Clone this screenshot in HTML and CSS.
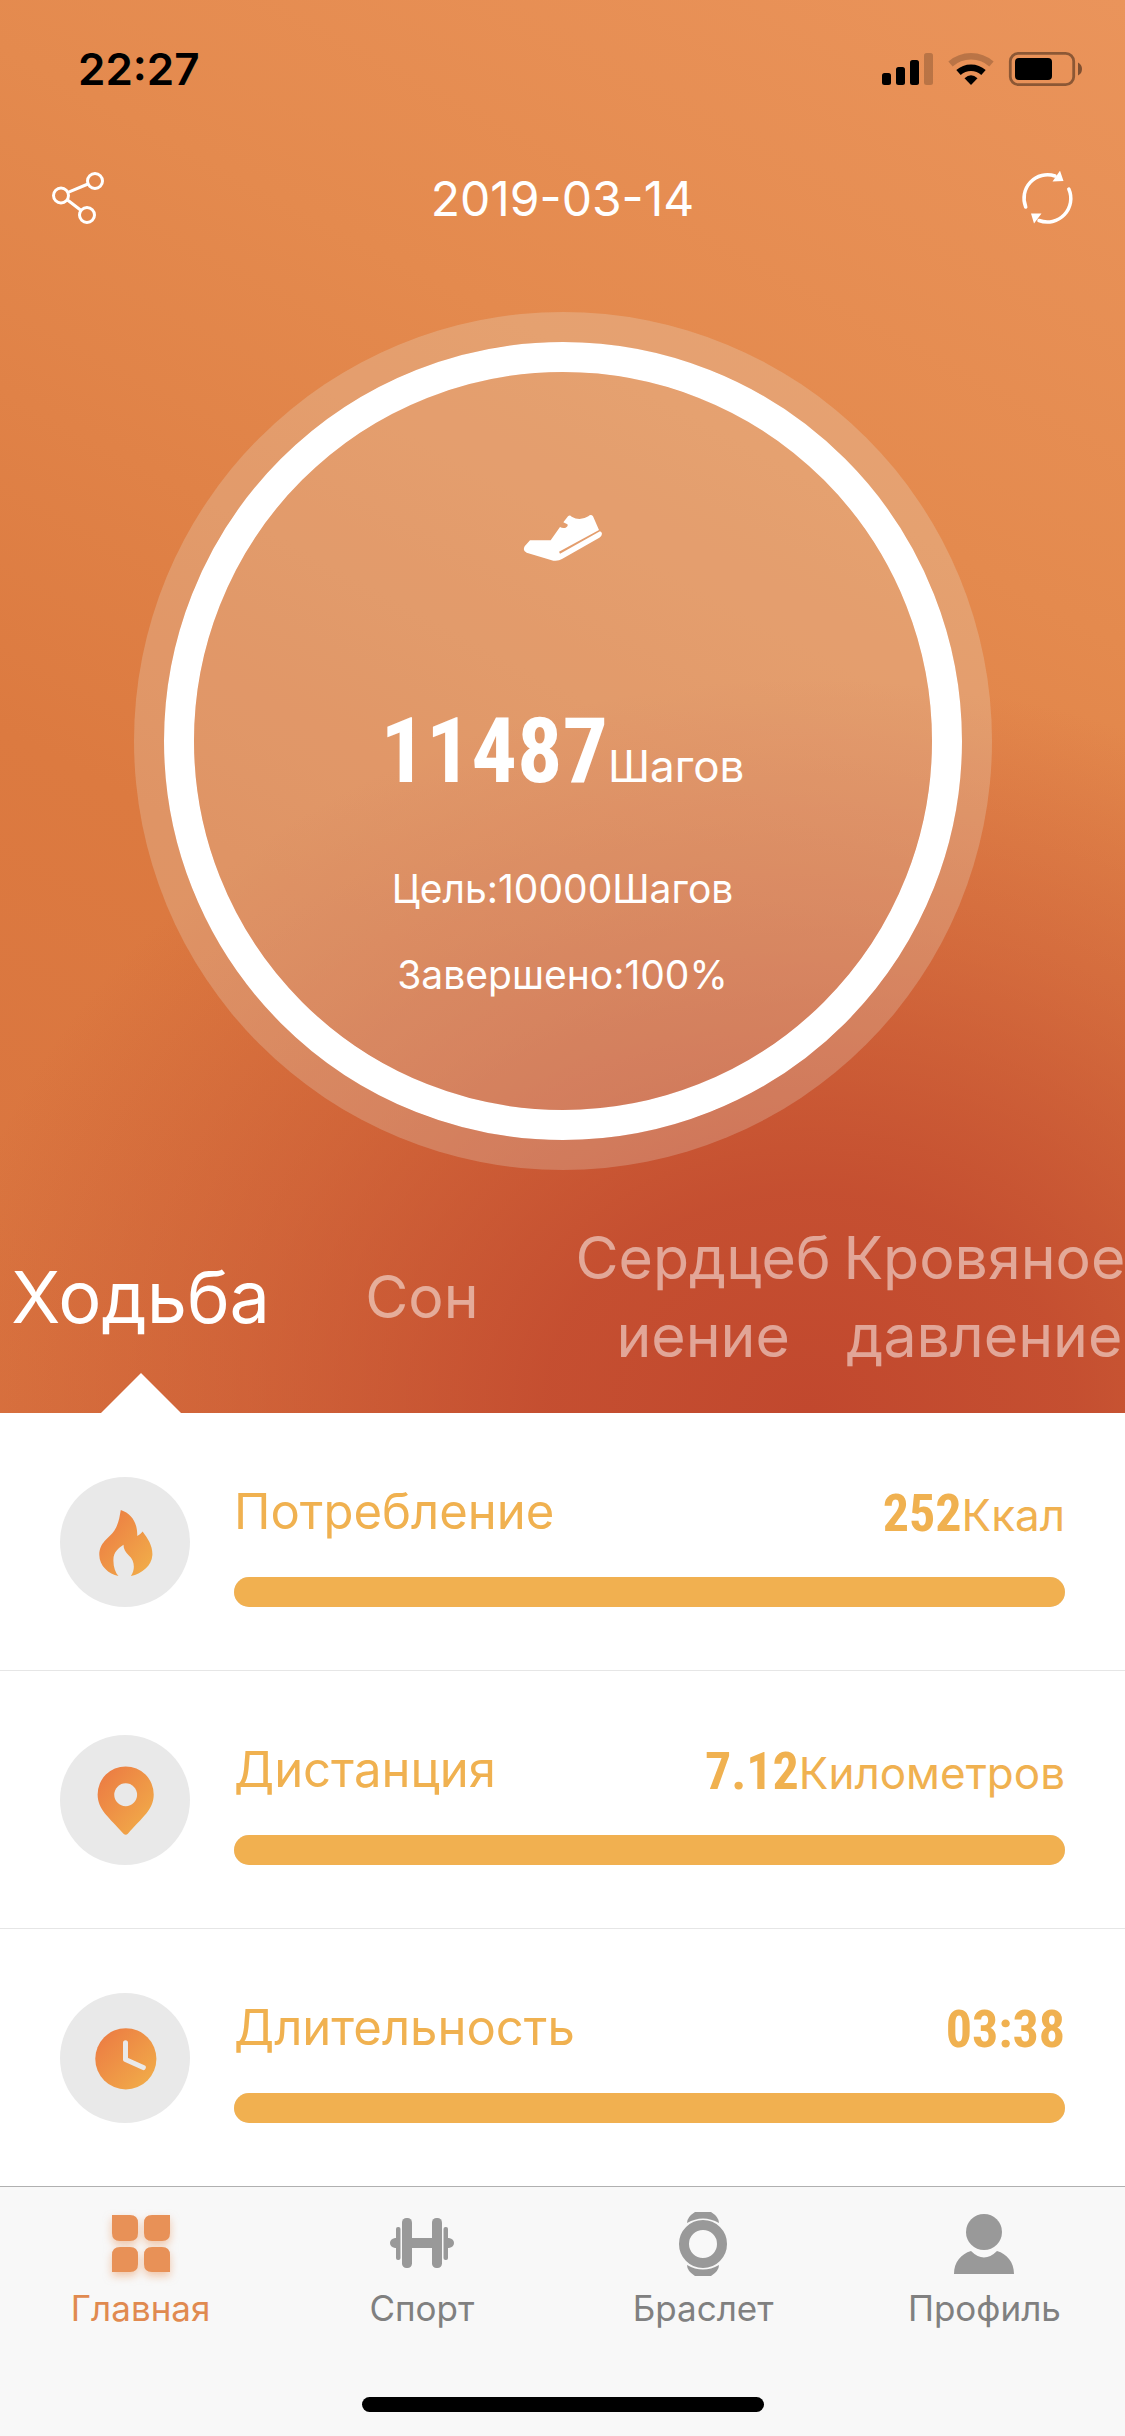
FILE: index.html
```html
<!DOCTYPE html>
<html lang="ru">
<head>
<meta charset="utf-8">
<meta name="viewport" content="width=device-width">
<title>Главная</title>
<link rel="stylesheet" href="styles.css">
</head>
<body>
<div class="hero">
  <div class="status">
    <span class="status-time">22:27</span>
    <svg class="status-icons" viewBox="882 51 200 36" aria-hidden="true">
      <rect x="882" y="73" width="9" height="12" rx="2.5"/>
      <rect x="896" y="67" width="9" height="18" rx="2.5"/>
      <rect x="910" y="60" width="9" height="25" rx="2.5"/>
      <rect x="924" y="53" width="9" height="32" rx="2.5" opacity=".2"/>
      <path d="M950.500 64 A31 31 0 0 1 991.500 64" fill="none" stroke="#000" stroke-width="6.500" opacity=".2"/>
      <path d="M958.500 72.500 A18.500 18.500 0 0 1 983.500 72.500" fill="none" stroke="#000" stroke-width="6.500"/>
      <path d="M964.500 78.300 Q971 72.300 977.500 78.300 L971 85Z"/>
      <rect x="1010.300" y="53.300" width="63.400" height="31.400" rx="8" fill="none" stroke="#000" stroke-width="2.800" opacity=".4"/>
      <rect x="1015" y="58" width="37" height="22" rx="4"/>
      <path d="M1078 62.500 Q1082 64.500 1082 69 Q1082 73.500 1078 75.500Z" opacity=".45"/>
    </svg>
  </div>
  <header class="header">
    <button class="icon-btn" aria-label="Поделиться">
      <svg viewBox="51 171 54 54" fill="none" stroke="#fff" stroke-width="3">
        <circle cx="95" cy="181" r="7.500"/><circle cx="61" cy="195.500" r="7.500"/><circle cx="87" cy="215" r="7.500"/>
        <path d="M68 192.300 L88 184 M67.500 200 L80.500 210"/>
      </svg>
    </button>
    <h1 class="date">2019-03-14</h1>
    <button class="icon-btn" aria-label="Обновить">
      <svg viewBox="1020 171 54 54" fill="none" stroke="#fff" stroke-width="3.500" stroke-linecap="round">
        <path d="M1025.700 207 A23.500 23.500 0 0 1 1055 176"/>
        <path d="M1068.800 189 A23.500 23.500 0 0 1 1039 220.500"/>
        <path d="M1060 170.700 L1063.500 181 L1052.500 181.500Z M1031 213.500 L1041.500 213.500 L1034 223.500Z" fill="#fff" stroke="none"/>
      </svg>
    </button>
  </header>
  <section class="ring">
    <svg class="shoe" viewBox="129 102 240 144" fill="#fff" aria-hidden="true">
      <path d="M150 181 L212 181 L240 141 Q248 146 257 143 Q266 138 262 133 L250 127 L264 109 Q269 103 275 110 Q299 125 325 109 Q333 101 339 109 L357 150 L237 215 L240 221 L360 154 Q369 157 364 167 Q362 170 358 173 L246 237 Q236 244 220 242 L140 218 Q127 213 134 199 Z"/>
    </svg>
    <p class="steps"><strong class="num num-big">11487</strong><span class="unit">Шагов</span></p>
    <p class="ring-line">Цель:10000Шагов</p>
    <p class="ring-line">Завершено:100%</p>
  </section>
  <nav class="tabs">
    <a class="tab active" href="#walk">Ходьба</a>
    <a class="tab" href="#sleep">Сон</a>
    <a class="tab" href="#heart">Сердцеб<br>иение</a>
    <a class="tab" href="#pressure">Кровяное<br>давление</a>
  </nav>
</div>

<main class="list">
  <section class="row">
    <svg class="row-icon" viewBox="60 51 387 387" aria-hidden="true">
      <defs><linearGradient id="warm" x1="0" y1="0" x2="1" y2="1"><stop offset=".1" stop-color="#ec7d43"/><stop offset=".9" stop-color="#f1ab49"/></linearGradient></defs>
      <path fill="url(#warm)" d="M241 149 C275 160 291 190 290 227 Q299 222 306 213 C322 235 336 255 335 283 C333 315 305 338 271 346 C285 325 282 300 265 285 C255 275 249 265 249 253 C235 262 218 275 219 300 C219 320 225 335 234 346 C205 340 177 315 177 283 C177 245 205 235 222 210 C235 190 237 170 241 149Z"/>
    </svg>
    <div class="row-body">
      <div class="row-text"><h2 class="label">Потребление</h2><p class="value"><strong class="num">252</strong><span class="unit">Ккал</span></p></div>
      <div class="bar" role="progressbar" aria-label="Потребление" aria-valuenow="100"><div class="bar-fill" style="width:100%"></div></div>
    </div>
  </section>
  <section class="row">
    <svg class="row-icon" viewBox="60 45 387 387" aria-hidden="true">
      <path fill="url(#warm)" d="M172 222 A83 83 0 0 1 339 222 C339 267 305 290 262 339 Q256 345 249 339 C206 290 172 267 172 222Z"/>
      <circle cx="255.500" cy="223" r="34" fill="#e9e9e9"/>
    </svg>
    <div class="row-body">
      <div class="row-text"><h2 class="label">Дистанция</h2><p class="value"><strong class="num">7.12</strong><span class="unit">Километров</span></p></div>
      <div class="bar" role="progressbar" aria-label="Дистанция" aria-valuenow="100"><div class="bar-fill" style="width:100%"></div></div>
    </div>
  </section>
  <section class="row">
    <svg class="row-icon" viewBox="60 819 387 387" aria-hidden="true">
      <circle cx="256" cy="1015" r="91" fill="url(#warm)"/>
      <path d="M255 967 V1017 L308 1041" fill="none" stroke="#e9e9e9" stroke-width="15" stroke-linecap="round" stroke-linejoin="round"/>
    </svg>
    <div class="row-body">
      <div class="row-text"><h2 class="label">Длительность</h2><p class="value"><strong class="num">03:38</strong></p></div>
      <div class="bar" role="progressbar" aria-label="Длительность" aria-valuenow="100"><div class="bar-fill" style="width:100%"></div></div>
    </div>
  </section>
</main>

<nav class="bottom">
  <div class="bottom-items">
    <a class="bottom-item current" href="#home">
      <svg viewBox="0 0 66 66" fill="#e89157" aria-hidden="true">
        <path d="M4 5H22Q30 5 30 13V23Q30 31 22 31H12Q4 31 4 23Z M62 5H44Q36 5 36 13V23Q36 31 44 31H54Q62 31 62 23Z M4 62H22Q30 62 30 54V45Q30 37 22 37H12Q4 37 4 45Z M62 62H44Q36 62 36 54V45Q36 37 44 37H54Q62 37 62 45Z"/>
      </svg>
      <span>Главная</span>
    </a>
    <a class="bottom-item" href="#sport">
      <svg viewBox="0 0 66 66" fill="#999" aria-hidden="true">
        <rect x="13" y="8" width="10" height="50" rx="4.500"/><rect x="43" y="8" width="10" height="50" rx="4.500"/>
        <rect x="22" y="28" width="22" height="10"/>
        <rect x="7" y="17" width="4.500" height="33" rx="2"/><rect x="54.500" y="17" width="4.500" height="33" rx="2"/>
        <path d="M7.500 28H6Q1 29 1 33T6 38H7.500Z M58.500 28H60Q65 29 65 33T60 38H58.500Z"/>
      </svg>
      <span>Спорт</span>
    </a>
    <a class="bottom-item" href="#band">
      <svg viewBox="0 0 66 66" fill="#999" aria-hidden="true">
        <circle cx="33" cy="34" r="19" fill="none" stroke="#999" stroke-width="10"/>
        <path d="M17 13Q17 7 25 2H41Q49 7 49 13Q33 4 17 13Z M17 55Q17 61 25 66H41Q49 61 49 55Q33 64 17 55Z"/>
      </svg>
      <span>Браслет</span>
    </a>
    <a class="bottom-item" href="#profile">
      <svg viewBox="0 0 66 66" fill="#999" aria-hidden="true">
        <circle cx="33" cy="22" r="18"/>
        <path d="M3 64C3 52 10 44 20 41Q33 54 46 41C56 44 63 52 63 64Z"/>
      </svg>
      <span>Профиль</span>
    </a>
  </div>
  <div class="home-indicator"></div>
</nav>
</body>
</html>
```
FILE: styles.css
```css
* { box-sizing: border-box; }

body {
  margin: 0;
  min-height: 100vh;
  display: flex;
  flex-direction: column;
  font-family: Inter, "Liberation Sans", sans-serif;
  background: #fff;
}

h1, h2, p { margin: 0; font-weight: 400; }
a { text-decoration: none; color: inherit; }

.hero {
  color: #fff;
  background:
    radial-gradient(ellipse 78% 52% at 72% 100%, #c1482e 0%, rgba(193, 72, 46, .86) 30%, rgba(193, 72, 46, .4) 65%, rgba(193, 72, 46, 0) 100%),
    linear-gradient(208deg, #ea945b 0%, #e48a4e 32%, #dc7a40 66%, #d9733f 100%);
}

.status {
  height: 132px;
  padding: 6px 43px 0 78px;
  display: flex;
  justify-content: space-between;
  align-items: center;
  color: #000;
}
.status-time { font-size: 44px; font-weight: 600; }
.status-icons { width: 200px; height: 36px; }

.header {
  height: 132px;
  padding: 0 51px;
  display: flex;
  justify-content: space-between;
  align-items: center;
}
.icon-btn { border: 0; padding: 0; background: none; }
.icon-btn svg { display: block; width: 54px; height: 54px; }
.date { font-size: 48px; }

.ring {
  width: 798px;
  height: 798px;
  margin: 78px auto 30px;
  padding-top: 142px;
  border: 30px solid #fff;
  border-radius: 50%;
  background: rgba(236, 236, 220, .24);
  background-clip: padding-box;
  box-shadow: 0 0 0 30px rgba(236, 236, 220, .24);
  display: flex;
  flex-direction: column;
  align-items: center;
}
.shoe { width: 80px; height: 48px; }

.num {
  font-family: "Roboto Condensed", "Liberation Sans Narrow", "DejaVu Sans Condensed", sans-serif;
  font-weight: 700;
  font-size: 52px;
}
.num-big { font-size: 90px; }
.unit { font-size: 44px; }
.steps { margin: 130px 0 29px; line-height: 120px; white-space: nowrap; }
.ring-line { font-size: 39px; line-height: 48px; margin-bottom: 38px; }

.tabs {
  display: grid;
  grid-template-columns: repeat(4, minmax(0, 1fr));
  height: 243px;
}
.tab {
  position: relative;
  padding-top: 10px;
  display: flex;
  align-items: center;
  justify-content: center;
  text-align: center;
  white-space: nowrap;
  font-size: 59px;
  line-height: 78px;
  color: rgba(255, 255, 255, .5);
}
.tab.active { font-size: 72px; color: #fff; }
.tab.active::after {
  content: "";
  position: absolute;
  bottom: 0;
  left: calc(50% - 40px);
  border: 40px solid transparent;
  border-top: 0;
  border-bottom-color: #fff;
}

.list { flex: 1; color: #f0b150; }
.row {
  padding: 64px 60px 63px;
  display: flex;
  gap: 44px;
  border-bottom: 1px solid #e6e6e6;
}
.row:last-child { border-bottom: 0; }
.row-icon {
  flex: none;
  width: 130px;
  height: 130px;
  border-radius: 50%;
  background: #e9e9e9;
}
.row-body {
  flex: 1;
  display: flex;
  flex-direction: column;
  justify-content: space-between;
}
.row-text {
  display: flex;
  justify-content: space-between;
  align-items: flex-start;
  line-height: 70px;
}
.label { font-size: 49px; }
.value { line-height: 74px; }
.bar { height: 30px; border-radius: 15px; background: #e9e9e9; }
.bar-fill { height: 100%; border-radius: 15px; background: #f1b050; }

.bottom {
  border-top: 1px solid #b0b0b0;
  background: #f8f8f8;
  color: #808080;
  padding: 23px 0 24px;
}
.bottom-items { display: grid; grid-template-columns: repeat(4, 1fr); }
.bottom-item {
  display: flex;
  flex-direction: column;
  align-items: center;
  gap: 10px;
  font-size: 35px;
  line-height: 44px;
}
.bottom-item svg { width: 66px; height: 66px; overflow: visible; }
.current { color: #e08a50; }
.current svg { filter: drop-shadow(0 4px 4px rgba(232, 145, 87, .5)); }
.home-indicator {
  width: 402px;
  height: 15px;
  margin: 67px auto 0;
  border-radius: 8px;
  background: #000;
}
```
